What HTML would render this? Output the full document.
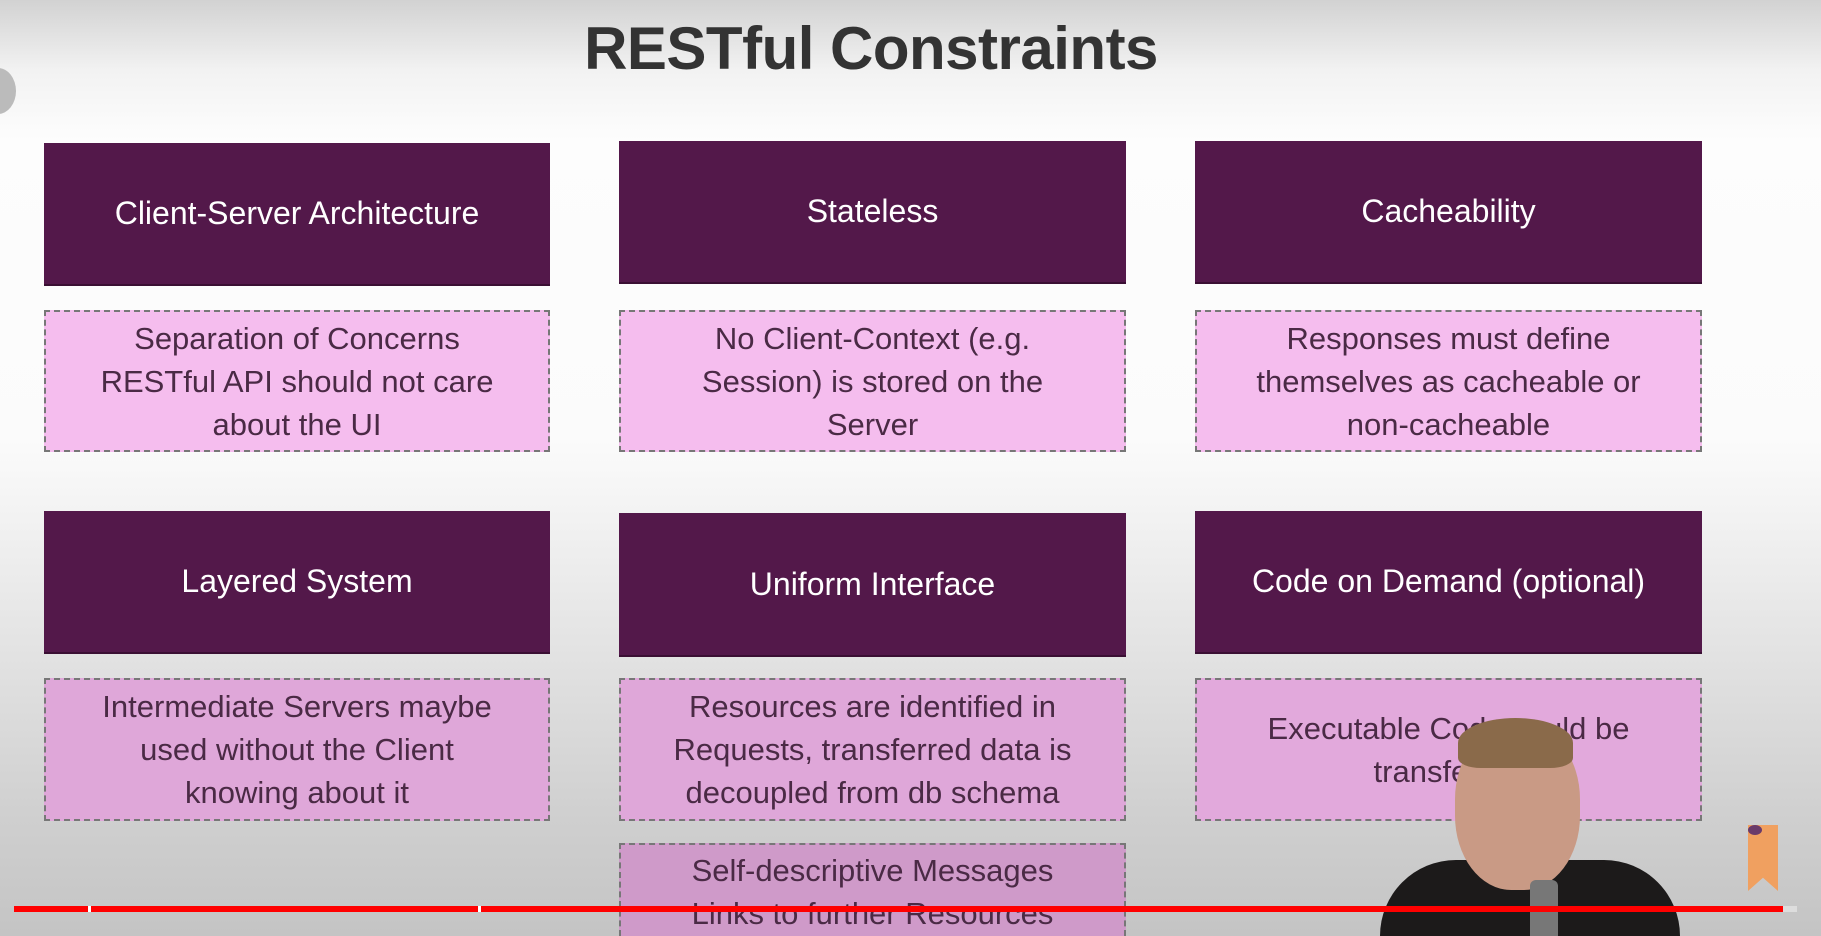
<!DOCTYPE html>
<html><head><meta charset="utf-8"><style>
*{margin:0;padding:0;box-sizing:border-box}
html,body{width:1821px;height:936px;overflow:hidden}
#w{width:1821px;height:936px;overflow:hidden;position:relative;font-family:"Liberation Sans",sans-serif;
background:linear-gradient(180deg,#d2d2d2 0px,#f2f2f2 70px,#fdfdfd 140px,#fbfbfb 440px,#e4e4e4 640px,#cfcfcf 820px,#c4c4c4 936px)}
h1{position:absolute;left:0;width:1742px;text-align:center;top:14px;font-size:60px;font-weight:bold;color:#333;letter-spacing:-0.5px}
.h{position:absolute;background:#53184a;color:#fff;font-size:32px;display:flex;align-items:center;justify-content:center;border-bottom:2px solid #3a0f33}
.d{position:absolute;background:#f5bdee;color:#4a2a45;font-size:31px;line-height:43px;text-align:center;display:flex;align-items:center;justify-content:center;border:2px dashed #777;white-space:nowrap}
.r2{background:#dfa7d9}
.c1{left:44px;width:506px}.c2{left:619px;width:507px}.c3{left:1195px;width:507px}
</style></head><body><div id="w">
<div style="position:absolute;left:-20px;top:68px;width:36px;height:46px;border-radius:50%;background:#bbb"></div>
<h1>RESTful Constraints</h1>
<div class="h c1" style="top:143px;height:143px">Client-Server Architecture</div>
<div class="h c2" style="top:141px;height:143px">Stateless</div>
<div class="h c3" style="top:141px;height:143px">Cacheability</div>
<div class="d c1" style="top:310px;height:142px">Separation of Concerns<br>RESTful API should not care<br>about the UI</div>
<div class="d c2" style="top:310px;height:142px">No Client-Context (e.g.<br>Session) is stored on the<br>Server</div>
<div class="d c3" style="top:310px;height:142px">Responses must define<br>themselves as cacheable or<br>non-cacheable</div>
<div class="h c1" style="top:511px;height:143px">Layered System</div>
<div class="h c2" style="top:513px;height:144px">Uniform Interface</div>
<div class="h c3" style="top:511px;height:143px">Code on Demand (optional)</div>
<div class="d r2 c1" style="top:678px;height:143px">Intermediate Servers maybe<br>used without the Client<br>knowing about it</div>
<div class="d r2 c2" style="top:678px;height:143px">Resources are identified in<br>Requests, transferred data is<br>decoupled from db schema</div>
<div class="d r2 c3" style="top:678px;height:143px;background:#e2a9dc">Executable Code could be<br>transferred</div>
<div class="d r2 c2" style="top:843px;height:93px;align-items:flex-start;padding-top:4px;border-bottom:none;overflow:hidden;background:#cf9ac9">Self-descriptive Messages<br>Links to further Resources</div>
<div style="position:absolute;left:1380px;top:860px;width:300px;height:76px;border-radius:150px 150px 0 0;background:#1c1a1a"></div>
<div style="position:absolute;left:1455px;top:725px;width:125px;height:165px;border-radius:45%;background:#c99a85"></div>
<div style="position:absolute;left:1458px;top:718px;width:115px;height:50px;border-radius:50% 50% 20% 20%;background:#8a6a4a"></div>
<div style="position:absolute;left:1530px;top:880px;width:28px;height:56px;background:#777;border-radius:6px 6px 0 0"></div>
<div style="position:absolute;left:1748px;top:825px;width:30px;height:66px;background:#f0a060;clip-path:polygon(0 0,100% 0,100% 100%,50% 80%,0 100%)"></div>
<div style="position:absolute;left:1748px;top:825px;width:14px;height:10px;background:#6a3a6a;border-radius:50%"></div>
<div style="position:absolute;left:14px;top:906px;width:1769px;height:6px;background:#f00"></div>
<div style="position:absolute;left:88px;top:906px;width:3px;height:6px;background:#fff"></div>
<div style="position:absolute;left:478px;top:906px;width:3px;height:6px;background:#fff"></div>
<div style="position:absolute;left:1783px;top:906px;width:14px;height:6px;background:#ddd"></div>
</div></body></html>
